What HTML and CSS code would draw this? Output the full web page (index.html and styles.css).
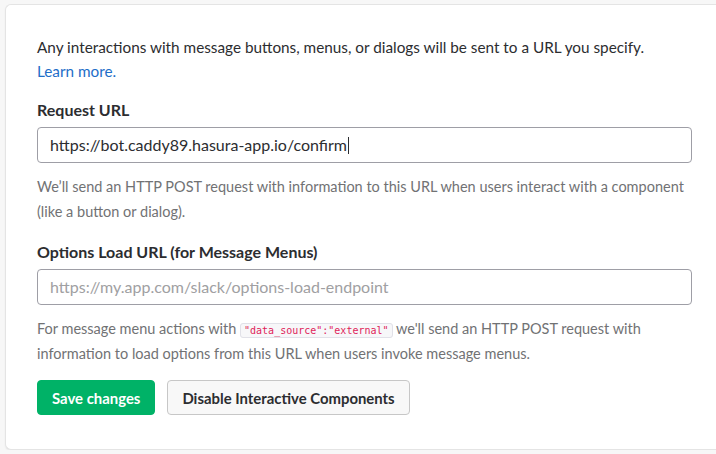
FILE: index.html
```html
<!DOCTYPE html>
<html>
<head>
<meta charset="utf-8">
<link rel="stylesheet" href="styles.css">
</head>
<body>
<div class="card">
  <p class="intro">Any interactions with message buttons, menus, or dialogs will be sent to a URL you specify.<br><a href="#" class="link">Learn more.</a></p>

  <label class="label">Request URL</label>
  <div class="input filled">https://bot.caddy89.hasura-app.io/confirm<span class="caret"></span></div>
  <p class="help">We’ll send an HTTP POST request with information to this URL when users interact with a component (like a button or dialog).</p>

  <label class="label">Options Load URL (for Message Menus)</label>
  <div class="input placeholder">https://my.app.com/slack/options-load-endpoint</div>
  <p class="help last">For message menu actions with <code class="code">"data_source":"external"</code> we'll send an HTTP POST request with information to load options from this URL when users invoke message menus.</p>

  <div class="actions">
    <button class="btn primary">Save changes</button>
    <button class="btn secondary">Disable Interactive Components</button>
  </div>
</div>
</body>
</html>
```

FILE: styles.css
```css
html, body {
  margin: 0;
  padding: 0;
  background: #f7f7f7;
}
body {
  padding: 4px 0 0 5px;
  font-family: Lato, "Liberation Sans", sans-serif;
  color: #2c2d30;
}
.card {
  background: #fff;
  border: 1px solid #e4e4e4;
  border-right: none;
  border-radius: 6px 0 0 6px;
  box-shadow: 0 1px 2px rgba(0,0,0,0.06);
  padding: 30px 0 32px 31px;
  width: 680px;
  height: 382px;
}
.intro {
  margin: 0 0 16px;
  max-width: 655px;
  font-size: 15.3px;
  line-height: 24px;
  color: #2c2d30;
}
.link {
  color: #1e6ec8;
  text-decoration: none;
}
.label {
  display: block;
  font-weight: 700;
  font-size: 16px;
  line-height: 22px;
  margin-bottom: 6px;
}
.input {
  box-sizing: border-box;
  width: 655px;
  height: 36px;
  border: 1px solid #9e9ea6;
  border-radius: 4px;
  padding: 0 12px;
  line-height: 34px;
  font-size: 16px;
  display: flex;
  align-items: center;
}
.input.filled { color: #2c2d30; }
.input.placeholder { color: #a0a0a2; }
.caret {
  display: inline-block;
  width: 1px;
  height: 17px;
  background: #2c2d30;
  margin-left: 1px;
}
.help {
  margin: 11px 0 17px;
  max-width: 655px;
  font-size: 14.5px;
  line-height: 25px;
  color: #717274;
}
.help.last {
  margin-bottom: 14px;
}
.code {
  font-family: "DejaVu Sans Mono", monospace;
  font-size: 10px;
  line-height: 14px;
  color: #e01e5a;
  background: #f7f7f9;
  border: 1px solid #e1e1e8;
  border-radius: 3px;
  padding: 1px 3px;
}
.actions {
  display: flex;
  gap: 12px;
}
.btn {
  height: 35px;
  border-radius: 4px;
  font-family: Lato, "Liberation Sans", sans-serif;
  font-weight: 700;
  font-size: 14.9px;
  padding: 0 14px;
  cursor: pointer;
}
.btn.primary {
  background: #00b267;
  color: #fff;
  border: 1px solid #00b267;
}
.btn.secondary {
  background: #f8f8f8;
  color: #2c2d30;
  border: 1px solid #c7c7c7;
}
```
